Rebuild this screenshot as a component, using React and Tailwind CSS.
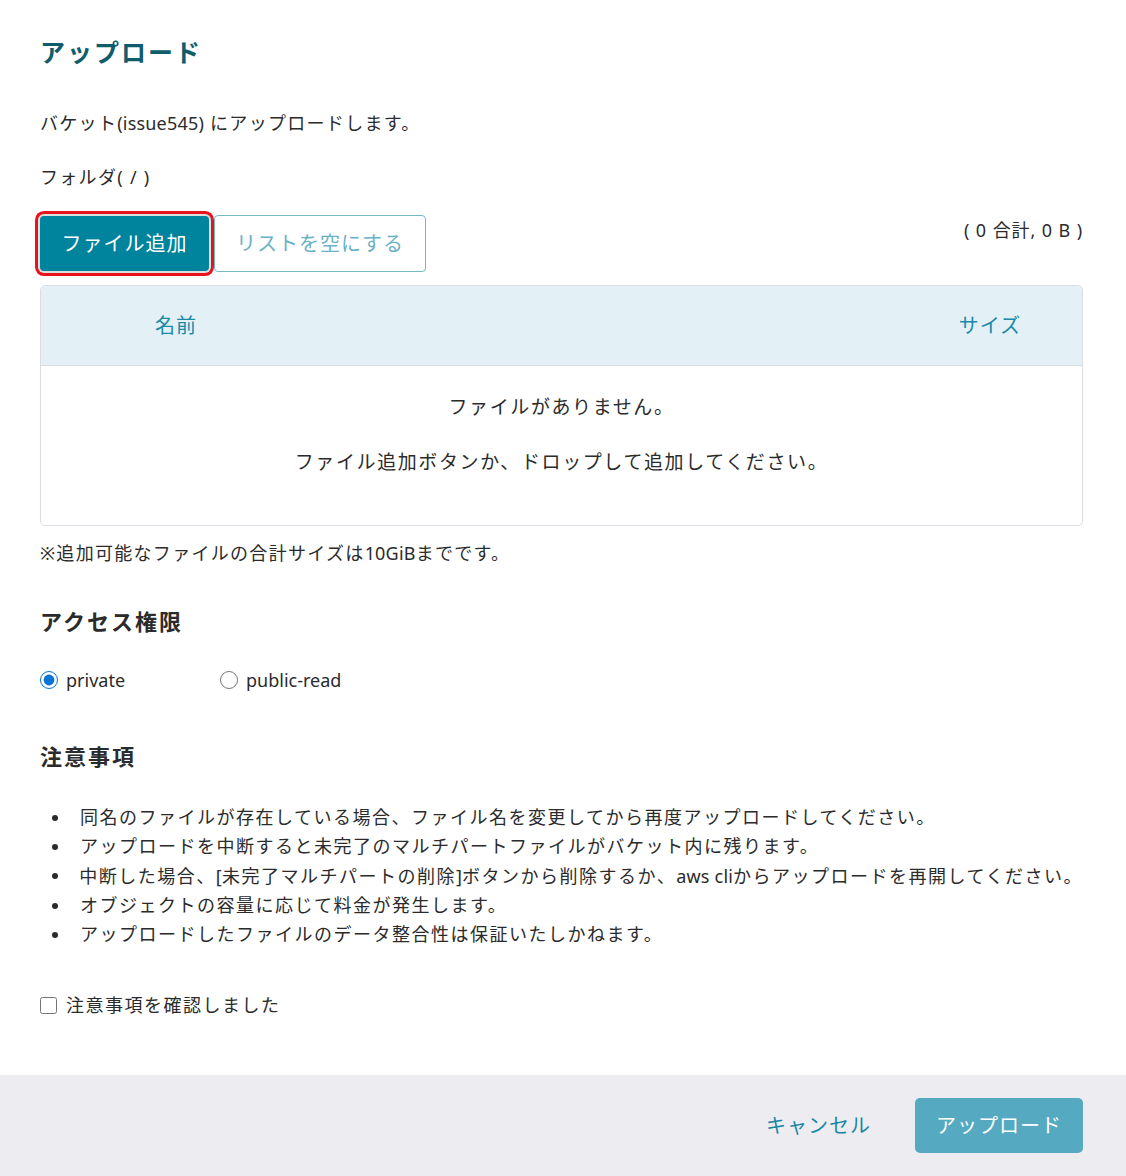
import { useState } from "react"

const L = ({ children }) => <span className="tracking-[0.2px]">{children}</span>

const NOTES = [
  <>同名のファイルが存在している場合、ファイル名を変更してから再度アップロードしてください。</>,
  <>アップロードを中断すると未完了のマルチパートファイルがバケット内に残ります。</>,
  <>中断した場合、<L>[</L>未完了マルチパートの削除<L>]</L>ボタンから削除するか、<L>aws cli</L>からアップロードを再開してください。</>,
  <>オブジェクトの容量に応じて料金が発生します。</>,
  <>アップロードしたファイルのデータ整合性は保証いたしかねます。</>,
]

export default function App() {
  const [acl, setAcl] = useState("private")
  const [agreed, setAgreed] = useState(false)

  return (
    <div
      className="bg-white text-[#2b2b2b] w-[1126px] min-h-[1176px] flex flex-col tracking-[1.3px]"
      style={{ fontFamily: '"Noto Sans", "Noto Sans CJK JP", sans-serif' }}
    >
      <div className="flex-1 pl-10 pr-[43px] pt-[34px]">
        <h1 className="text-[25px] leading-[36px] font-semibold text-[#0e5c6c] tracking-[2px]">
          アップロード
        </h1>

        <p className="mt-[40px] text-[18px] leading-[26px]">
          バケット<L>(issue545)</L> にアップロードします。
        </p>
        <p className="mt-[28px] text-[18px] leading-[26px]">フォルダ( / )</p>

        <div className="mt-[25px] flex items-start justify-between">
          <div className="flex items-center gap-[5px]">
            <button className="h-[55px] w-[169px] rounded-[4px] bg-[#00839c] text-white text-[20px] tracking-[1px] ring-[3px] ring-[#e8131b] ring-offset-2 ring-offset-[#dedede]">
              ファイル追加
            </button>
            <button className="h-[57px] w-[212px] rounded-[4px] border border-[#74b9c9] bg-white text-[#6cb1c6] text-[20px] tracking-[1px]">
              リストを空にする
            </button>
          </div>
          <span className="mt-[2px] text-[18px] leading-[26px] tracking-[0.9px]">( 0 合計, 0 B )</span>
        </div>

        <div className="mt-[13px] w-[1043px] rounded-[5px] border border-[#d9dde5] overflow-hidden">
          <div className="h-[80px] bg-[#e3f1f6] border-b border-[#d9dde5] flex items-center text-[20px] text-[#1a8aa8] tracking-[1px]">
            <div className="w-[270px] text-center">名前</div>
            <div className="flex-1" />
            <div className="w-[184px] text-center">サイズ</div>
          </div>
          <div className="h-[159px] flex flex-col items-center pt-[27px] text-[19px] tracking-[1.6px] text-[#2b2b2b]">
            <p className="leading-[28px]">ファイルがありません。</p>
            <p className="mt-[27px] leading-[28px]">ファイル追加ボタンか、ドロップして追加してください。</p>
          </div>
        </div>

        <p className="mt-[14px] text-[18px] leading-[26px]">
          ※追加可能なファイルの合計サイズは<L>10GiB</L>までです。
        </p>

        <h2 className="mt-[40px] text-[22px] leading-[30px] font-semibold tracking-[2px]">アクセス権限</h2>

        <div className="mt-[31px] flex items-center text-[18px] leading-[26px] tracking-normal">
          <label className="flex items-center gap-[8px] w-[180px] cursor-pointer">
            <input
              type="radio"
              name="acl"
              checked={acl === "private"}
              onChange={() => setAcl("private")}
              className="w-[18px] h-[18px] m-0 accent-[#0a74d4]"
            />
            private
          </label>
          <label className="flex items-center gap-[8px] cursor-pointer">
            <input
              type="radio"
              name="acl"
              checked={acl === "public-read"}
              onChange={() => setAcl("public-read")}
              className="w-[18px] h-[18px] m-0 accent-[#0a74d4]"
            />
            public-read
          </label>
        </div>

        <h2 className="mt-[48px] text-[22px] leading-[30px] font-semibold tracking-[2px]">注意事項</h2>

        <ul className="mt-[32px] text-[18px] leading-[29.3px] tracking-[1.5px]">
          {NOTES.map((n, i) => (
            <li key={i} className="flex items-center whitespace-nowrap">
              <span className="w-[40px] flex pl-[12px]">
                <span className="w-[6px] h-[6px] rounded-full bg-[#2b2b2b]" />
              </span>
              <span>{n}</span>
            </li>
          ))}
        </ul>

        <label className="mt-[43px] flex items-center gap-[9px] text-[18px] leading-[26px] tracking-[1.5px] cursor-pointer">
          <input
            type="checkbox"
            checked={agreed}
            onChange={(e) => setAgreed(e.target.checked)}
            className="w-[17px] h-[17px] m-0"
          />
          注意事項を確認しました
        </label>
      </div>

      <div className="h-[101px] bg-[#ededf1] flex items-center justify-end gap-[44px] pr-[43px]">
        <button className="text-[20px] text-[#1a86a6] tracking-[1px]">キャンセル</button>
        <button className="h-[55px] w-[168px] rounded-[5px] bg-[#55a9c0] text-white text-[20px] tracking-[1px]">
          アップロード
        </button>
      </div>
    </div>
  )
}
